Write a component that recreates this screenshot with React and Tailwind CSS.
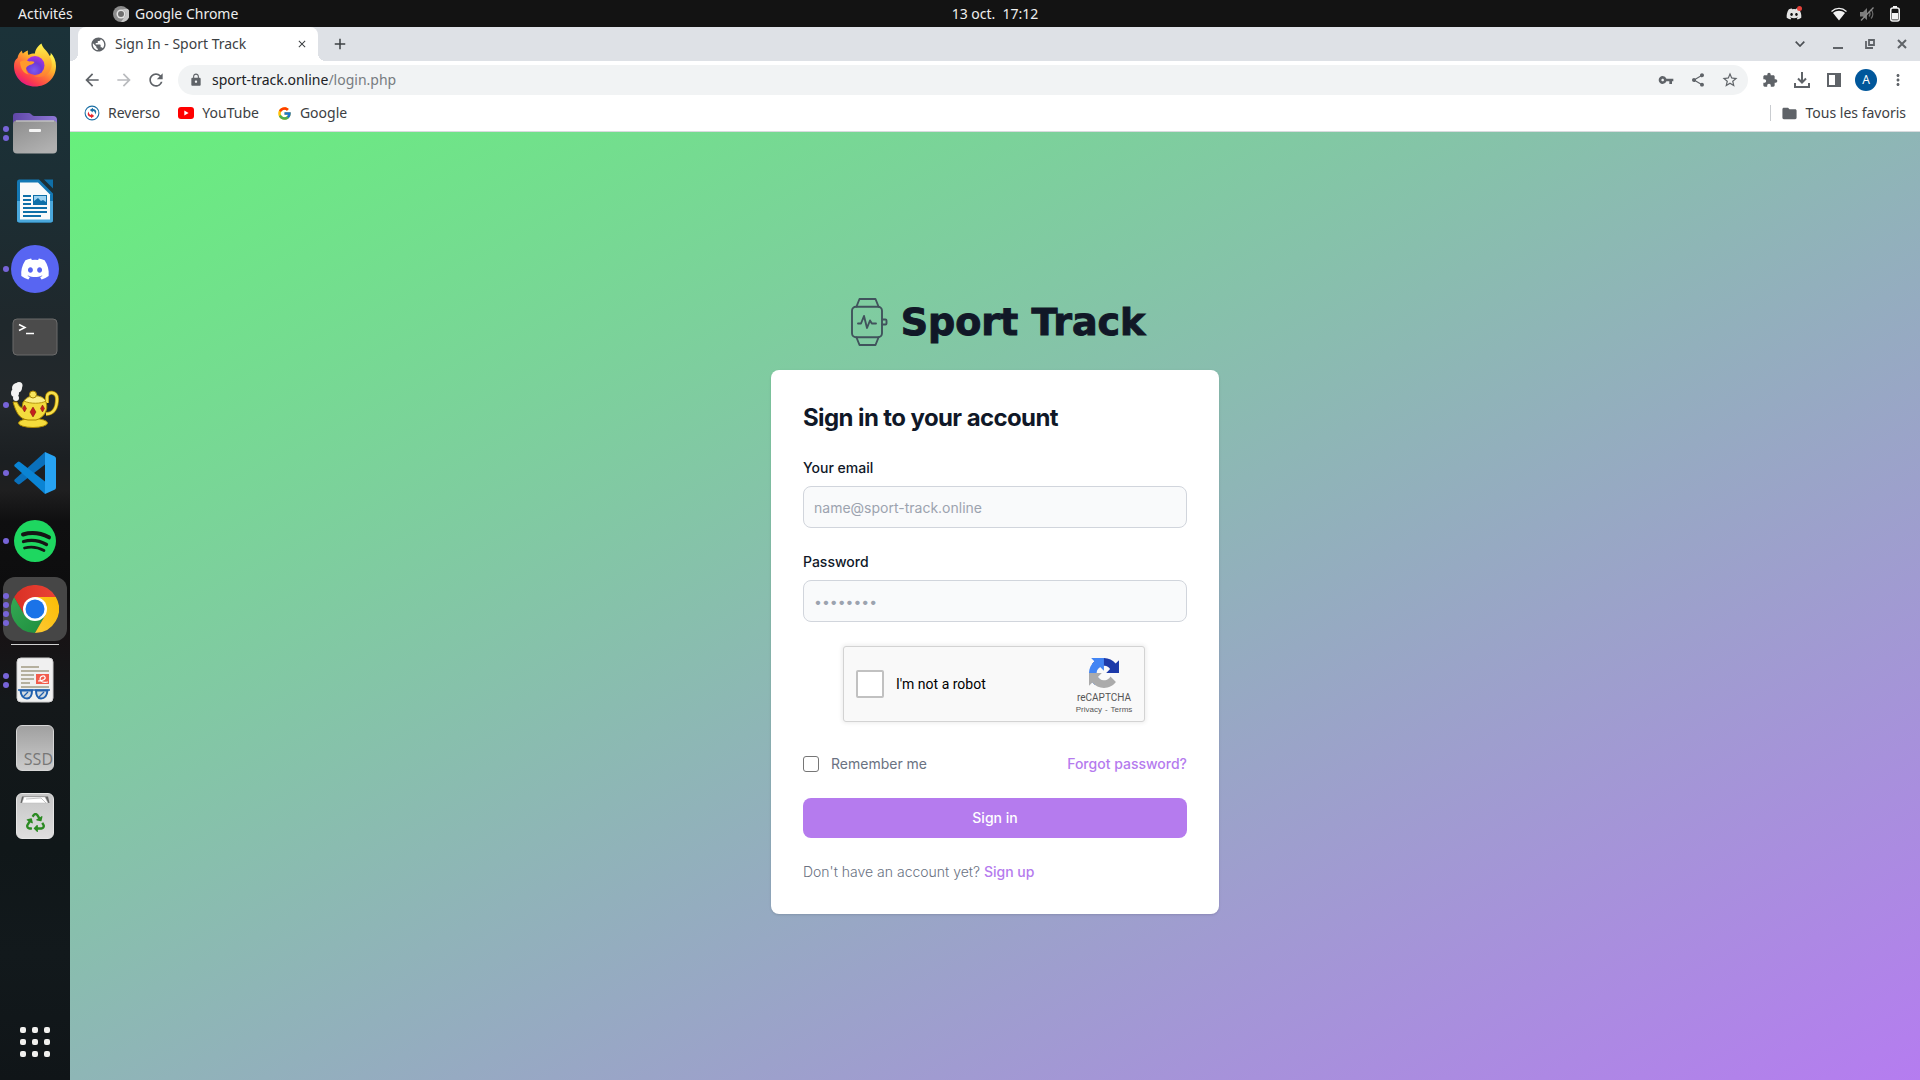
import React from "react";
import {
  MdArrowBack,
  MdArrowForward,
  MdRefresh,
  MdLock,
  MdVpnKey,
  MdShare,
  MdStarBorder,
  MdExtension,
  MdMoreVert,
  MdFolder,
  MdPublic,
  MdClose,
  MdAdd,
} from "react-icons/md";
import { FaDiscord, FaRecycle } from "react-icons/fa";
import { FcGoogle } from "react-icons/fc";

/* ---------- dock icons ---------- */

function FirefoxIcon() {
  return (
    <svg viewBox="0 0 42 44" className="h-11 w-[42px]" aria-hidden="true">
      <defs>
        <linearGradient id="ffBody" x1="0.85" y1="0.1" x2="0.2" y2="0.95">
          <stop offset="0" stopColor="#fff44f" />
          <stop offset="0.3" stopColor="#ffb62c" />
          <stop offset="0.55" stopColor="#ff7139" />
          <stop offset="0.8" stopColor="#fb3a4f" />
          <stop offset="1" stopColor="#e31587" />
        </linearGradient>
        <linearGradient id="ffFlame" x1="0.5" y1="0" x2="0.5" y2="1">
          <stop offset="0" stopColor="#fff44f" />
          <stop offset="0.6" stopColor="#ffb22e" />
          <stop offset="1" stopColor="#ff7a33" />
        </linearGradient>
        <radialGradient id="ffGlobe" cx="0.45" cy="0.75" r="0.8">
          <stop offset="0" stopColor="#7a5cf0" />
          <stop offset="0.5" stopColor="#7038d6" />
          <stop offset="1" stopColor="#b833e1" />
        </radialGradient>
      </defs>
      <path
        d="M3.5 15C4 11.500 5.500 9.500 8 7.500C8 9 8.300 9.800 9 10.500C10.500 9.300 12 8.200 14 7.500C13.500 9.500 14 11 14.500 12C18 10 22 10.500 24 11L36 13C37 11.500 36.800 10.500 36.500 9.500C40 13 42 18 42 23C42 35 33 43.500 21 43.500C9 43.500 0 34.500 0 23C0 19.500 1 16.500 3.500 15Z"
        fill="url(#ffBody)"
      />
      <path
        d="M27.500 0.500C22.500 4 20.500 8 21 12.500C27 13 31 18 30 24C29 30 25 33 20 33C29 36 36 31 37.500 24C39 17 35 11 31.500 7C29 4.500 28 2.500 27.500 0.500Z"
        fill="url(#ffFlame)"
      />
      <circle cx="21" cy="22.500" r="9.500" fill="url(#ffGlobe)" />
      <path
        d="M6 19C8 17.500 12 17 15.500 18.500C17.500 18 19.500 18.300 20.500 19C19.500 21.500 16 21.500 14 23C11.500 24 11 28 15 31.500C10 31 6.500 26 6 19Z"
        fill="#ff9a2b"
      />
    </svg>
  );
}

function FilesIcon() {
  return (
    <svg viewBox="0 0 46 42" className="h-[42px] w-[46px]" aria-hidden="true">
      <defs>
        <linearGradient id="folderFront" x1="0" y1="0" x2="0.6" y2="1">
          <stop offset="0" stopColor="#8d8d8d" />
          <stop offset="1" stopColor="#b0b0b0" />
        </linearGradient>
        <linearGradient id="folderBack" x1="0" y1="0" x2="1" y2="0">
          <stop offset="0" stopColor="#6047a8" />
          <stop offset="1" stopColor="#8e78d6" />
        </linearGradient>
      </defs>
      <path d="M4 1h13c2 0 3 3 5 3h19a4 4 0 0 1 4 4v12H1V4a3 3 0 0 1 3-3Z" fill="url(#folderBack)" />
      <rect x="1" y="8.500" width="44" height="33" rx="4" fill="url(#folderFront)" />
      <path d="M4 9h38" stroke="#d4d4d4" strokeWidth="1" />
      <rect x="17" y="17" width="12" height="3" rx="1" fill="#f5f5f5" />
    </svg>
  );
}

function WriterIcon() {
  return (
    <svg viewBox="0 0 38 44" className="h-11 w-[38px]" aria-hidden="true">
      <path d="M3 0.500h20L37 14.500V41a2.500 2.500 0 0 1-2.500 2.500h-31A2.500 2.500 0 0 1 1 41V3A2.500 2.500 0 0 1 3 0.500Z" fill="#1478b4" />
      <path d="M1 22h36v19a2.500 2.500 0 0 1-2.500 2.500h-31A2.500 2.500 0 0 1 1 41Z" fill="#4aa8dc" />
      <path d="M4 3.500h18L34 15.500v25H4Z" fill="#fafafa" />
      <path d="M28 0.500h9v9Z" fill="#0f6fa8" />
      <g fill="#0f6fa8">
        <rect x="7" y="16" width="8" height="2" />
        <rect x="7" y="20" width="8" height="2" />
        <rect x="7" y="24" width="8" height="2" />
        <rect x="7" y="28" width="24" height="2" />
        <rect x="7" y="32" width="24" height="2" />
        <rect x="7" y="36" width="18" height="2" />
      </g>
      <rect x="17.500" y="16.500" width="13" height="9" fill="#9ed2f0" stroke="#0f6fa8" />
      <path d="M18 25v-3l4-3 3 3 2-1 3 2v2Z" fill="#0f6fa8" />
    </svg>
  );
}

function DiscordIcon() {
  return (
    <span className="flex size-12 items-center justify-center rounded-full bg-[#5865f2]">
      <FaDiscord className="size-[30px] text-white" />
    </span>
  );
}

function TerminalIcon() {
  return (
    <svg viewBox="0 0 46 38" className="h-[38px] w-[46px]" aria-hidden="true">
      <rect x="1" y="1" width="44" height="36" rx="4" fill="#4b4b4b" stroke="#6b6b6b" />
      <path d="M7 6.500l6 3-6 3" fill="none" stroke="#fff" strokeWidth="1.500" />
      <path d="M14 15.500h8" stroke="#fff" strokeWidth="1.500" />
    </svg>
  );
}

function TeapotIcon() {
  return (
    <svg viewBox="0 0 48 48" className="size-12" aria-hidden="true">
      <g fill="#f2f2f2">
        <circle cx="6" cy="7" r="5" />
        <circle cx="8" cy="4.500" r="3.500" />
        <circle cx="4" cy="12" r="4" />
        <circle cx="5" cy="17" r="3" />
      </g>
      <path d="M36 22V16c0-6 10-6 10 2s-3 15-11 15" fill="none" stroke="#a88400" strokeWidth="4" />
      <path d="M36 22V16c0-6 10-6 10 2s-3 15-11 15" fill="none" stroke="#f7e04c" strokeWidth="2.500" />
      <ellipse cx="22" cy="42" rx="14.500" ry="4.500" fill="#f5dc3c" stroke="#a88400" />
      <path d="M2 21h4c2 4 3 5 5 6l1-6c4-5 20-5 23 0 3 9-3 16-10 18h-8C8 38 5 31 2 21Z" fill="#f3dc3e" stroke="#a88400" />
      <path d="M13 20c4-7 18-7 22 0-5 3-16 3-22 0Z" fill="#fbef86" stroke="#b89810" />
      <circle cx="22" cy="13.500" r="3.500" fill="#f9e65c" stroke="#a88400" />
      <g fill="#c41e1e" stroke="#7d1010" strokeWidth="0.500">
        <path d="M13.500 24l2 3.500-2 3.500-2-3.500Z" />
        <path d="M22 26l3 5-3 5-3-5Z" />
        <path d="M31.500 24l2 3.500-2 3.500-2-3.500Z" />
      </g>
    </svg>
  );
}

function VsCodeIcon() {
  return (
    <svg viewBox="0 0 42 42" className="size-[42px]" aria-hidden="true">
      <path d="M31 0L0.700 27.500a1.500 1.500 0 0 0 0 2l3 2.600a1.800 1.800 0 0 0 2.200 0L31 12.500Z" fill="#0a70bb" />
      <path d="M31 42L0.700 14.500a1.500 1.500 0 0 1 0-2l3-2.600a1.800 1.800 0 0 1 2.200 0L31 29.500Z" fill="#0a84d4" />
      <path d="M31 0L40.500 4.300a2.500 2.500 0 0 1 1.500 2.300v28.800a2.500 2.500 0 0 1-1.500 2.300L31 42Z" fill="#27a3f3" />
    </svg>
  );
}

function SpotifyIcon() {
  return (
    <svg viewBox="0 0 42 42" className="size-[42px]" aria-hidden="true">
      <circle cx="21" cy="21" r="21" fill="#1ed760" />
      <g fill="none" stroke="#151515" strokeLinecap="round">
        <path d="M9 14.500C17 12.200 27 13.200 35 17.300" strokeWidth="4" />
        <path d="M9.500 21.500C17 19.500 25.500 20.500 32.500 24.500" strokeWidth="3.300" />
        <path d="M10.500 28C17 26.300 24 27.200 30 30.500" strokeWidth="2.700" />
      </g>
    </svg>
  );
}

function ChromeIcon() {
  return (
    <svg viewBox="0 0 48 48" className="size-12" aria-hidden="true">
      <defs>
        <linearGradient id="chRed" x1="0" y1="0" x2="1" y2="0">
          <stop offset="0" stopColor="#d93025" />
          <stop offset="1" stopColor="#ea4335" />
        </linearGradient>
        <linearGradient id="chYellow" x1="0" y1="1" x2="1" y2="0">
          <stop offset="0" stopColor="#fcc934" />
          <stop offset="1" stopColor="#fbbc04" />
        </linearGradient>
        <linearGradient id="chGreen" x1="1" y1="1" x2="0" y2="0">
          <stop offset="0" stopColor="#1e8e3e" />
          <stop offset="1" stopColor="#34a853" />
        </linearGradient>
      </defs>
      <path d="M3.200 12L13.600 30 24 24l10.400 6L24 48A24 24 0 0 1 3.200 12Z" fill="url(#chGreen)" />
      <path d="M24 12h20.800A24 24 0 0 1 24 48l10.400-18L24 24Z" fill="url(#chYellow)" />
      <path d="M24 24l-10.400 6L3.200 12a24 24 0 0 1 41.600 0H24Z" fill="url(#chRed)" />
      <circle cx="24" cy="24" r="12" fill="#fff" />
      <circle cx="24" cy="24" r="9.500" fill="#1a73e8" />
    </svg>
  );
}

function DocumentViewerIcon() {
  return (
    <svg viewBox="0 0 38 46" className="h-[46px] w-[38px]" aria-hidden="true">
      <rect x="1" y="1" width="36" height="44" rx="4" fill="#f0f0f0" stroke="#cfcfcf" />
      <g fill="#b5b09e">
        <rect x="5" y="9" width="18" height="2" />
        <rect x="5" y="13" width="28" height="2" />
        <rect x="5" y="17" width="13" height="2" />
        <rect x="5" y="21" width="13" height="2" />
        <rect x="5" y="25" width="9" height="2" />
        <rect x="5" y="29" width="28" height="2" />
      </g>
      <rect x="20" y="17" width="13" height="10" fill="#f25c4c" />
      <path d="M22 24c5 0 8-2 7-4s-5-1-5 2 4 4 8 3" fill="none" stroke="#fff" strokeWidth="1.200" />
      <path d="M4.500 33.500h11.500c0 4-1.500 8-5 8s-6-3-6.500-8Z" fill="#d3dae0" stroke="#1f5fae" strokeWidth="2" />
      <path d="M20 33.500h11.500c-0.500 5-3 8-6.500 8s-5-4-5-8Z" fill="#d3dae0" stroke="#1f5fae" strokeWidth="2" />
      <path d="M2 33h32M7 40l5-5M23 40l5-5" stroke="#1f5fae" strokeWidth="1.300" />
    </svg>
  );
}

function SsdIcon() {
  return (
    <span className="flex h-[46px] w-[38px] items-end justify-end rounded-md border border-[#d6d6d6] bg-linear-to-b from-[#a0a0a0] to-[#cccccc] font-['Open_Sans',sans-serif] text-base leading-[22px] text-[#777777]">
      SSD
    </span>
  );
}

function TrashIcon() {
  return (
    <span className="relative flex h-[46px] w-[38px] items-end justify-center rounded-md border border-[#e6e6e6] bg-linear-to-b from-[#c6c6c6] to-[#dedede] pb-[6px]">
      <svg viewBox="0 0 30 8" className="absolute top-[2px] left-[3px] h-2 w-[30px]" aria-hidden="true">
        <path d="M2 0.500h26l1.500 6.500H0.500Z" fill="#666" />
        <path d="M4 1h21l3 6H2Z" fill="#fff" stroke="#bbb" strokeWidth="0.500" />
        <path d="M6 3l15-1 5 5" fill="none" stroke="#aaa" strokeWidth="0.700" />
      </svg>
      <FaRecycle className="size-[19px] text-[#2b8a22]" />
    </span>
  );
}

const MAIN_APPS = [
  { name: "Firefox", icon: FirefoxIcon, windows: 0 },
  { name: "Fichiers", icon: FilesIcon, windows: 2 },
  { name: "LibreOffice Writer", icon: WriterIcon, windows: 0 },
  { name: "Discord", icon: DiscordIcon, windows: 1 },
  { name: "Terminal", icon: TerminalIcon, windows: 0 },
  { name: "Teapot", icon: TeapotIcon, windows: 1 },
  { name: "Visual Studio Code", icon: VsCodeIcon, windows: 1 },
  { name: "Spotify", icon: SpotifyIcon, windows: 1 },
  { name: "Google Chrome", icon: ChromeIcon, windows: 4, active: true },
];

const EXTRA_APPS = [
  { name: "Visionneur de documents", icon: DocumentViewerIcon, windows: 2 },
  { name: "Disque SSD", icon: SsdIcon, windows: 0 },
  { name: "Corbeille", icon: TrashIcon, windows: 0 },
];

function DockItem({ app }) {
  const Icon = app.icon;
  return (
    <li>
      <button
        type="button"
        aria-label={app.name}
        className={
          app.active
            ? "relative flex size-16 items-center justify-center rounded-xl bg-[#464646]"
            : "relative flex size-16 items-center justify-center rounded-xl"
        }
      >
        <span className="absolute inset-y-0 left-0 flex flex-col items-center justify-center gap-[3px]">
          {Array.from({ length: app.windows }, (_, i) => (
            <span key={i} className="size-[6px] rounded-full bg-[#7764d8]" />
          ))}
        </span>
        <Icon />
      </button>
    </li>
  );
}

function Dock() {
  return (
    <nav
      aria-label="Dock"
      className="flex w-[70px] shrink-0 flex-col items-center bg-[linear-gradient(to_bottom,#1b3239_0%,#1c2f35_14%,#1f282c_28%,#23282b_36%,#1b1f22_41%,#1f1f20_44%,#0f0f10_47%,#0d0d0e_54%,#171315_58%,#14181a_64%,#101719_78%,#12191c_88%,#101518_100%)] pt-[6px]"
    >
      <ul className="flex flex-col gap-1">
        {MAIN_APPS.map((app) => (
          <DockItem key={app.name} app={app} />
        ))}
      </ul>
      <div className="flex h-[7px] w-12 items-center">
        <span className="h-px w-full bg-[#d0d0d0]" />
      </div>
      <ul className="flex flex-col gap-1">
        {EXTRA_APPS.map((app) => (
          <DockItem key={app.name} app={app} />
        ))}
      </ul>
      <button type="button" aria-label="Afficher les applications" className="mt-auto mb-[6px] grid size-16 grid-cols-3 place-content-center justify-items-center gap-[6px] px-[17px]">
        {Array.from({ length: 9 }, (_, i) => (
          <span key={i} className="size-[6px] rounded-[2px] bg-[#f0f0ee]" />
        ))}
      </button>
    </nav>
  );
}

/* ---------- system bar ---------- */

function SystemBar() {
  return (
    <header className="grid h-[27px] shrink-0 grid-cols-[70px_1fr_auto_1fr] items-center bg-[#131313] text-sm whitespace-nowrap text-[#eeeeee]">
      <button type="button" className="w-max pl-[18px]">Activités</button>
      <div className="flex items-center gap-[6px] pl-[43px]">
        <svg viewBox="0 0 16 16" className="size-4" aria-hidden="true">
          <circle cx="8" cy="8" r="8" fill="#8c8c8c" />
          <path d="M8 16l4.500-6.500A5 5 0 0 0 8 3h7a8 8 0 0 1-7 13Z" fill="#c6c6c6" />
          <circle cx="8" cy="8" r="4.500" fill="#e2e2e2" />
          <circle cx="8" cy="8" r="3" fill="#6e6e6e" />
        </svg>
        <span>Google Chrome</span>
      </div>
      <time className="whitespace-pre">13 oct.  17:12</time>
      <div className="flex items-center justify-end pr-5">
        <span className="relative mr-[29px] flex">
          <FaDiscord className="size-4 text-[#e4e4e4]" />
          <span className="absolute top-0 right-0 size-[5px] rounded-full bg-[#e5413a]" />
        </span>
        <svg viewBox="0 0 16 14" className="mr-[13px] h-[14px] w-4" aria-hidden="true">
          <path d="M0.500 4.500C5 0.300 11 0.300 15.500 4.500" fill="none" stroke="#f2f2f2" strokeWidth="1.300" />
          <path d="M2 6C5.500 3 10.500 3 14 6L8 13.500Z" fill="#f2f2f2" />
        </svg>
        <svg viewBox="0 0 14 14" className="mr-4 size-[14px]" aria-hidden="true">
          <path d="M0 5h3l4-4v12L3 9.500H0Z" fill="#7c7c7c" />
          <path d="M9 4.500c1.300 1.500 1.300 3.500 0 5M11 2.500c2.500 2.600 2.500 6.400 0 9" fill="none" stroke="#6a6a6a" strokeWidth="1.200" />
          <path d="M1 13.500L13.500 0.500" stroke="#8c8c8c" strokeWidth="1.300" />
        </svg>
        <svg viewBox="0 0 10 16" className="h-4 w-[10px]" aria-hidden="true">
          <rect x="3" y="0" width="4" height="2" fill="#f2f2f2" />
          <rect x="0.750" y="2" width="8.500" height="13" rx="2" fill="none" stroke="#f2f2f2" strokeWidth="1.500" />
          <rect x="2" y="7" width="6" height="6.500" fill="#f2f2f2" />
        </svg>
      </div>
    </header>
  );
}

/* ---------- browser chrome ---------- */

function IconButton({ label, children }) {
  return (
    <button type="button" aria-label={label} className="flex h-[30px] w-8 shrink-0 items-center justify-center">
      {children}
    </button>
  );
}

function TabStrip() {
  return (
    <div className="flex h-[34px] items-center bg-[#dee1e6] pl-2 text-[#5f6368]">
      <div className="relative flex h-full w-60 items-center rounded-t-lg bg-white pr-[10px] pl-3">
        <span className="absolute bottom-0 -left-2 size-2 bg-[radial-gradient(circle_at_top_left,#dee1e6_8px,#ffffff_8px)]" />
        <span className="absolute -right-2 bottom-0 size-2 bg-[radial-gradient(circle_at_top_right,#dee1e6_8px,#ffffff_8px)]" />
        <MdPublic className="size-[17px]" />
        <span className="ml-2 flex-1 text-sm text-[#3c4043]">Sign In - Sport Track</span>
        <button type="button" aria-label="Fermer l'onglet">
          <MdClose className="size-3 text-[#3c4043]" />
        </button>
      </div>
      <button type="button" aria-label="Nouvel onglet" className="ml-[13px]">
        <MdAdd className="size-[18px] text-[#3c4043]" />
      </button>
      <div className="ml-auto flex items-center pr-[2px]">
        <IconButton label="Rechercher dans les onglets">
          <svg viewBox="0 0 10 6" className="h-[6px] w-[10px]" aria-hidden="true">
            <path d="M0.700 0.700L5 5l4.300-4.300" fill="none" stroke="#4b4f54" strokeWidth="1.700" />
          </svg>
        </IconButton>
        <span className="w-[6px]" />
        <IconButton label="Réduire">
          <span className="mt-2 h-[2px] w-[10px] bg-[#5f6368]" />
        </IconButton>
        <IconButton label="Restaurer">
          <svg viewBox="0 0 10 10" className="size-[10px]" aria-hidden="true">
            <path d="M4 1h5v5H4ZM1 2v7h7" fill="none" stroke="#5f6368" strokeWidth="1.800" />
          </svg>
        </IconButton>
        <IconButton label="Fermer">
          <svg viewBox="0 0 10 10" className="size-[10px]" aria-hidden="true">
            <path d="M1 1l8 8M9 1L1 9" stroke="#5f6368" strokeWidth="2" />
          </svg>
        </IconButton>
      </div>
    </div>
  );
}

function Toolbar() {
  return (
    <div className="flex h-[38px] items-center px-[6px] text-[#5f6368]">
      <IconButton label="Précédent"><MdArrowBack className="size-5" /></IconButton>
      <IconButton label="Suivant"><MdArrowForward className="size-5 text-[#b9bbbe]" /></IconButton>
      <IconButton label="Actualiser"><MdRefresh className="size-5" /></IconButton>
      <form className="mx-[6px] flex h-[30px] flex-1 items-center rounded-full bg-[#f1f3f4] pr-[2px] pl-[11px]" onSubmit={(e) => e.preventDefault()}>
        <MdLock className="mr-[9px] size-[14px]" />
        <span className="flex-1 text-sm text-[#777b80]">
          <span className="text-[#202124]">sport-track.online</span>/login.php
        </span>
        <IconButton label="Mots de passe"><MdVpnKey className="size-4" /></IconButton>
        <IconButton label="Partager"><MdShare className="size-4" /></IconButton>
        <IconButton label="Ajouter aux favoris"><MdStarBorder className="size-[18px]" /></IconButton>
      </form>
      <IconButton label="Extensions"><MdExtension className="size-4" /></IconButton>
      <IconButton label="Téléchargements">
        <svg viewBox="0 0 16 16" className="size-4" aria-hidden="true">
          <path d="M8 0v10M4 6.500l4 4 4-4M1 11v4h14v-4" fill="none" stroke="#5f6368" strokeWidth="2" />
        </svg>
      </IconButton>
      <IconButton label="Panneau latéral">
        <svg viewBox="0 0 14 14" className="size-[14px]" aria-hidden="true">
          <path d="M1 1h12v12H1Z" fill="none" stroke="#5f6368" strokeWidth="2" />
          <rect x="8" y="1" width="5" height="12" fill="#5f6368" />
        </svg>
      </IconButton>
      <IconButton label="Profil">
        <span className="flex size-[22px] items-center justify-center rounded-full bg-[#01579b] text-xs text-white">A</span>
      </IconButton>
      <IconButton label="Menu"><MdMoreVert className="size-[18px]" /></IconButton>
    </div>
  );
}

function BookmarksBar() {
  return (
    <div className="flex h-[33px] items-center border-b border-[#d9dbde] px-[14px] pb-1 text-sm text-[#3c4043]">
      <a href="#reverso" className="mr-[18px] flex items-center">
        <svg viewBox="0 0 16 16" className="mr-2 size-4" aria-hidden="true">
          <circle cx="8" cy="8" r="6.900" fill="#fff" stroke="#1a6fa5" strokeWidth="1.100" />
          <path d="M9 2.800L5.800 5l3 2.400V6c1.700.200 2.600 1.600 2.200 3.500C13.500 7 12 4.300 9 4.100Z" fill="#1a6fa5" />
          <path d="M7 13.200l3.200-2.200-3-2.400V10C5.500 9.800 4.600 8.400 5 6.500 2.500 9 4 11.700 7 11.900Z" fill="#e8262d" />
        </svg>
        Reverso
      </a>
      <a href="#youtube" className="mr-[18px] flex items-center">
        <svg viewBox="0 0 16 12" className="mr-2 h-3 w-4" aria-hidden="true">
          <rect width="16" height="12" rx="3" fill="#f00" />
          <path d="M6.300 3.500L10.600 6 6.300 8.500Z" fill="#fff" />
        </svg>
        YouTube
      </a>
      <a href="#google" className="flex items-center">
        <FcGoogle className="mr-2 size-[15px]" />
        Google
      </a>
      <a href="#favoris" className="ml-auto flex h-4 items-center border-l border-[#c9ccd0] pl-[10px]">
        <MdFolder className="mr-2 size-[17px] text-[#5f6368]" />
        Tous les favoris
      </a>
    </div>
  );
}

/* ---------- login page ---------- */

function WatchLogo() {
  return (
    <svg viewBox="0 0 48 48" className="size-12" fill="none" stroke="#40535c" strokeWidth="1.900" strokeLinejoin="round" strokeLinecap="round" aria-hidden="true">
      <rect x="7" y="8.800" width="30" height="30.500" rx="4" />
      <path d="M11.500 8.500L14.500 1h16L33.500 8.500" />
      <path d="M11.500 39.500L14.500 47h16L33.500 39.500" />
      <path d="M37.500 21.500h3a1 1 0 0 1 1 1v3a1 1 0 0 1-1 1h-3" />
      <path d="M13 25.500h3L19 18l3 12 3-7.500 1.800 3H31" />
    </svg>
  );
}

function RecaptchaLogo() {
  return (
    <svg viewBox="0 0 64 64" className="size-[30px]" aria-hidden="true">
      <path fill="#1c3aa9" d="M64 31.955l-.033-1.370V4.687l-7.160 7.160C50.948 4.674 42.033.093 32.050.093c-10.400 0-19.622 4.960-25.458 12.640l11.736 11.860a15.550 15.550 0 0 1 4.754-5.334c2.050-1.600 4.952-2.906 8.968-2.906.485 0 .860.057 1.135.163 4.976.393 9.288 3.140 11.828 7.124l-8.307 8.307L64 31.953" />
      <path fill="#4285f4" d="M31.862.094l-1.370.033H4.594l7.160 7.160C4.580 13.147 0 22.060 0 32.046c0 10.400 4.960 19.622 12.640 25.458L24.500 45.768a15.550 15.550 0 0 1-5.334-4.754c-1.600-2.050-2.906-4.952-2.906-8.968 0-.485.057-.860.163-1.135.393-4.976 3.140-9.288 7.124-11.828l8.307 8.307L31.860.095" />
      <path fill="#ababab" d="M.001 32.045l.033 1.370v25.898l7.160-7.160c5.860 7.173 14.774 11.754 24.760 11.754 10.400 0 19.622-4.960 25.458-12.640l-11.736-11.860a15.550 15.550 0 0 1-4.754 5.334c-2.050 1.600-4.952 2.906-8.968 2.906-.485 0-.860-.057-1.135-.163-4.976-.393-9.288-3.140-11.828-7.124l8.307-8.307c-10.522.040-22.400.066-27.295-.005" />
    </svg>
  );
}

function Recaptcha() {
  return (
    <div className="mr-[2px] mb-2 flex h-[76px] w-[302px] items-center self-center rounded-[3px] border border-[#d3d3d3] bg-[#f9f9f9] pl-3 font-[Roboto,sans-serif] shadow-[0_0_4px_1px_rgba(0,0,0,0.08)]">
      <input id="robot" type="checkbox" className="size-7 appearance-none rounded-[2px] border-2 border-[#c1c1c1] bg-white" />
      <label htmlFor="robot" className="flex-1 pl-3 text-sm text-black">I'm not a robot</label>
      <div className="flex w-20 flex-col items-center pt-[6px] text-[#555555]">
        <RecaptchaLogo />
        <span className="mt-1 text-[10px] leading-3">reCAPTCHA</span>
        <span className="flex gap-[3px] font-['Liberation_Sans',sans-serif] text-[8px] leading-3">
          <a href="#privacy">Privacy</a>
          <span>-</span>
          <a href="#terms">Terms</a>
        </span>
      </div>
    </div>
  );
}

const FIELD =
  "block h-[42px] w-full rounded-lg border border-gray-300 bg-[#f9fafb] px-[10px] text-sm text-gray-900 placeholder:text-[#9ca3af]";

function LoginPage() {
  return (
    <main className="flex flex-1 flex-col items-center justify-center bg-[linear-gradient(to_bottom_right,#67f07c,#b57cf0)] font-[Inter,sans-serif]">
      <a href="#home" className="mb-6 flex items-center gap-2 text-[#111827]">
        <WatchLogo />
        <span className="font-['DejaVu_Sans',sans-serif] text-[38px] leading-10 font-bold [-webkit-text-stroke:1px_#111827]">Sport Track</span>
      </a>
      <div className="w-full max-w-md rounded-lg bg-white p-8 shadow">
        <h1 className="mb-6 text-2xl font-bold tracking-tight text-gray-900">Sign in to your account</h1>
        <form className="flex flex-col gap-6" onSubmit={(e) => e.preventDefault()}>
          <div>
            <label htmlFor="email" className="mb-2 block text-sm font-medium text-gray-900">Your email</label>
            <input id="email" type="email" placeholder="name@sport-track.online" className={FIELD} />
          </div>
          <div>
            <label htmlFor="password" className="mb-2 block text-sm font-medium text-gray-900">Password</label>
            <input id="password" type="password" placeholder="••••••••" className={FIELD} />
          </div>
          <Recaptcha />
          <div className="flex items-center justify-between text-sm">
            <div className="flex items-center">
              <input id="remember" type="checkbox" className="size-4 appearance-none rounded-[3px] border border-[#767676] bg-white" />
              <label htmlFor="remember" className="pl-3 text-gray-500">Remember me</label>
            </div>
            <a href="#forgot" className="font-medium text-[#b57bee]">Forgot password?</a>
          </div>
          <button type="submit" className="h-10 w-full rounded-lg bg-[#b57bee] text-center text-sm font-medium text-white">Sign in</button>
          <p className="text-sm font-light text-gray-500">
            Don't have an account yet? <a href="#signup" className="font-medium text-[#b57bee]">Sign up</a>
          </p>
        </form>
      </div>
    </main>
  );
}

export default function App() {
  return (
    <div className="flex min-h-screen flex-col font-['Noto_Sans',sans-serif]">
      <SystemBar />
      <div className="flex flex-1">
        <Dock />
        <div className="flex min-w-0 flex-1 flex-col bg-white">
          <TabStrip />
          <Toolbar />
          <BookmarksBar />
          <LoginPage />
        </div>
      </div>
    </div>
  );
}
